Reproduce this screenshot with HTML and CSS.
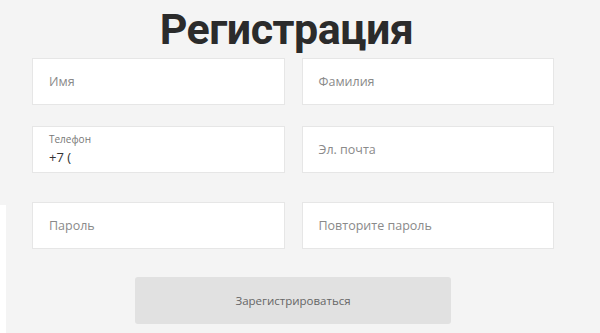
FILE: index.html
```html
<!DOCTYPE html>
<html>
<head>
    <meta charset="UTF-8" />
    <title>Регистрация</title>
    <link rel="stylesheet" href="styles.css">
</head>
<body>
    <div class="edge"></div>
    <main class="register">
        <h1>Регистрация</h1>
        <form class="fields">
            <div class="row row1">
                <label class="field"><span class="ph">Имя</span></label>
                <label class="field"><span class="ph">Фамилия</span></label>
            </div>
            <div class="row row2">
                <label class="field field-filled">
                    <span class="small">Телефон</span>
                    <span class="value">+7 (</span>
                </label>
                <label class="field"><span class="ph">Эл. почта</span></label>
            </div>
            <div class="row row3">
                <label class="field"><span class="ph">Пароль</span></label>
                <label class="field"><span class="ph">Повторите пароль</span></label>
            </div>
            <div class="actions">
                <button type="button" class="btn">Зарегистрироваться</button>
            </div>
        </form>
    </main>
</body>
</html>
```

FILE: styles.css
```css
* {
    margin: 0;
    padding: 0;
    box-sizing: border-box;
}
body {
    font-family: "Open Sans", "Liberation Sans", sans-serif;
    background: #f4f4f4;
    width: 600px;
    height: 333px;
    overflow: hidden;
    position: relative;
}

/* белая полоска слева внизу */
.edge {
    position: absolute;
    left: 0;
    top: 205px;
    width: 6px;
    bottom: 0;
    background: #fff;
}

.register {
    width: 522px;
    margin-left: 32px;
}
h1 {
    text-align: center;
    padding-right: 13px;
    font-family: Roboto, "Open Sans", sans-serif;
    font-size: 43px;
    letter-spacing: -0.5px;
    font-weight: 700;
    color: #2b2b2b;
    line-height: 58px;
}

.row {
    display: grid;
    grid-template-columns: 1fr 1fr;
    column-gap: 17px;
}
.row2 { margin-top: 21px; }
.row3 { margin-top: 29px; }

.field {
    height: 47px;
    background: #fff;
    border: 1px solid #e6e6e6;
    padding: 0 16px;
    display: flex;
    flex-direction: column;
    justify-content: center;
}
.ph {
    font-size: 12.5px;
    color: #8a8a8a;
}
.field-filled {
    justify-content: flex-start;
    padding-top: 5px;
}
.small {
    font-size: 10px;
    color: #777;
    line-height: 14px;
}
.value {
    font-size: 13px;
    color: #333;
    line-height: 18px;
    margin-top: 2px;
}

.actions {
    display: flex;
    justify-content: center;
    margin-top: 28px;
}
.btn {
    width: 316px;
    height: 47px;
    border: none;
    border-radius: 3px;
    background: #e1e1e1;
    color: #666;
    font-family: "Open Sans", "Liberation Sans", sans-serif;
    font-size: 11.5px;
}
```
